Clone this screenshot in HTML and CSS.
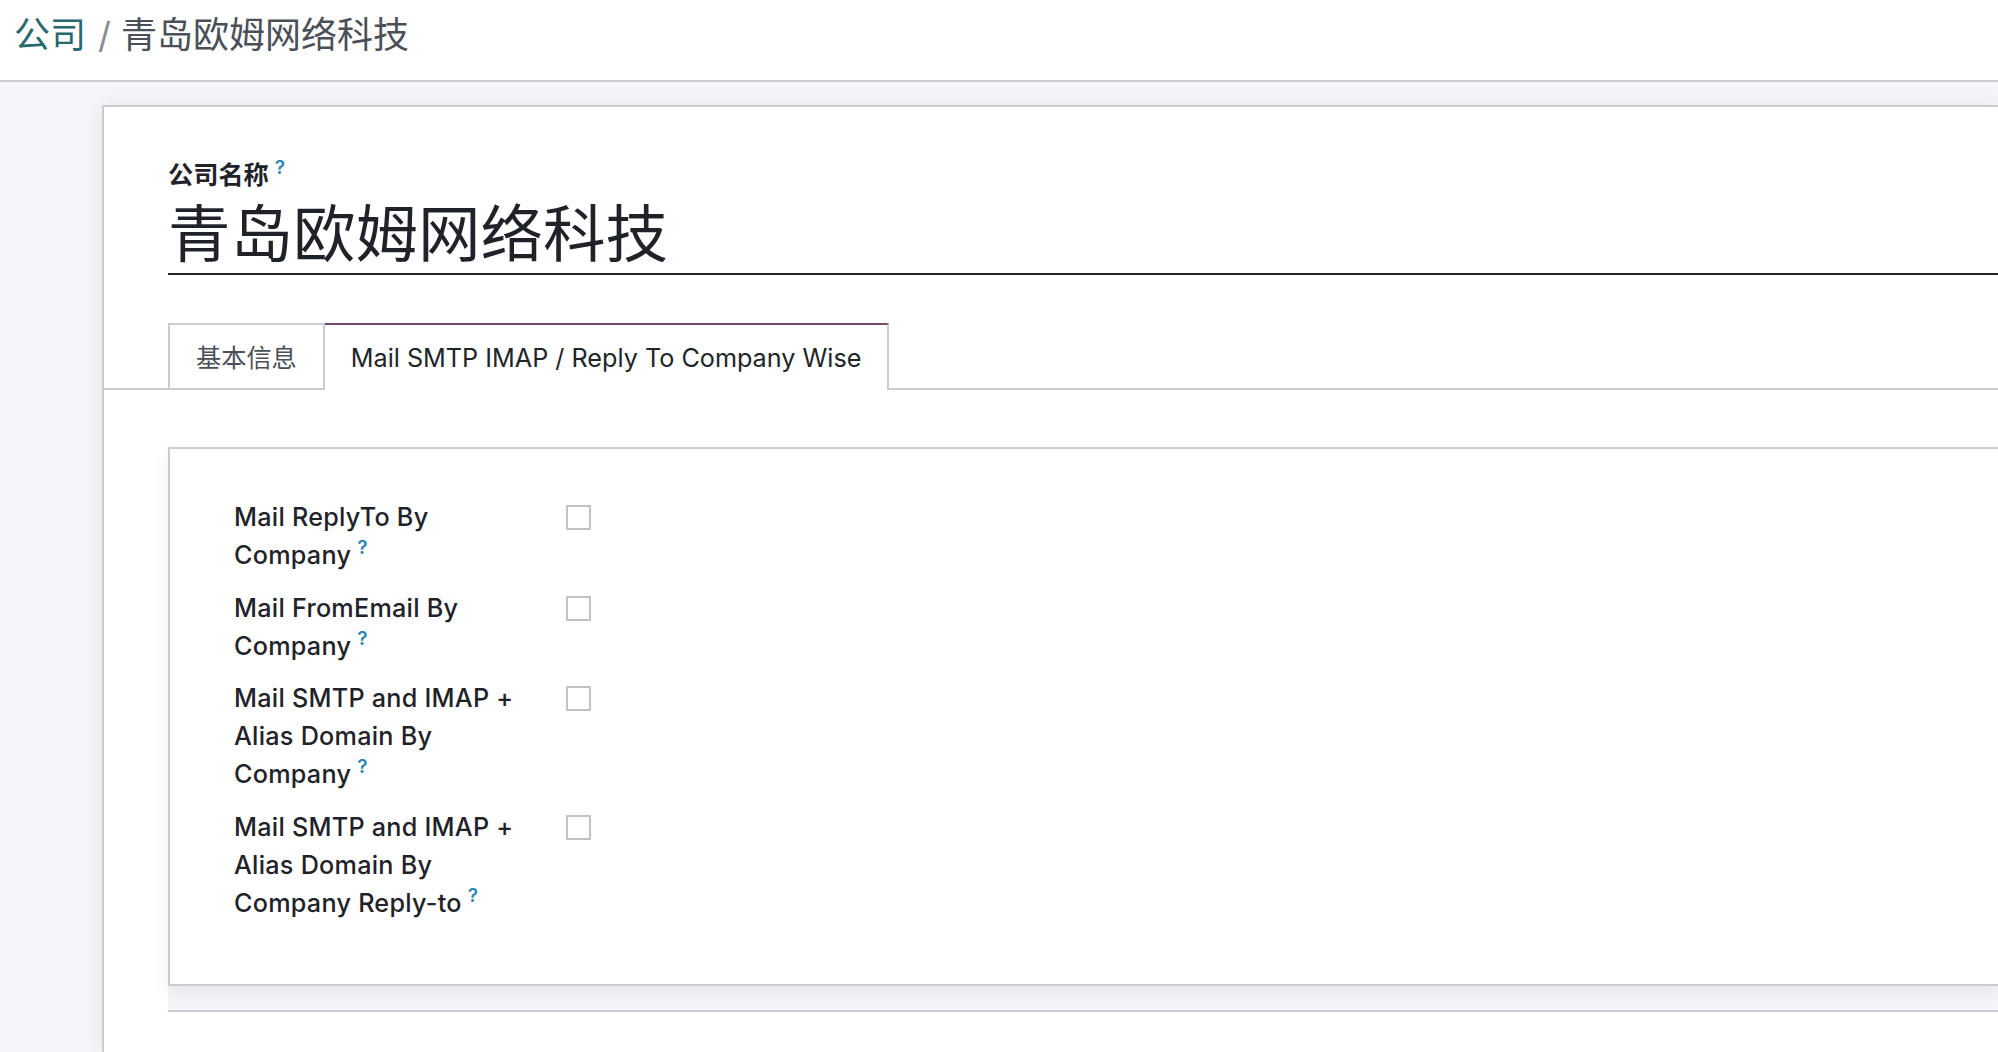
FILE: index.html
```html
<!DOCTYPE html>
<html lang="zh-CN">
<head>
<meta charset="utf-8">
<title>公司 / 青岛欧姆网络科技</title>
<link rel="stylesheet" href="styles.css">
</head>
<body>
<header class="topbar">
  <nav class="crumbs">
    <a class="crumb-link" href="#">公司</a>
    <span class="crumb-sep">/</span>
    <span class="crumb-current">青岛欧姆网络科技</span>
  </nav>
</header>
<main class="sheet-bg">
  <section class="sheet">
    <div class="title-block">
      <label class="name-label">公司名称<sup class="help">?</sup></label>
      <div class="name-input">青岛欧姆网络科技</div>
    </div>
    <div class="tabs">
      <div class="tab">基本信息</div>
      <div class="tab tab-active">Mail SMTP IMAP / Reply To Company Wise</div>
    </div>
    <div class="inner-bg">
      <div class="inner-sheet">
        <div class="group">
          <div class="field-label">Mail ReplyTo By<br>Company<sup class="help">?</sup></div>
          <div class="field-value"><span class="checkbox"></span></div>

          <div class="field-label">Mail FromEmail By<br>Company<sup class="help">?</sup></div>
          <div class="field-value"><span class="checkbox"></span></div>

          <div class="field-label">Mail SMTP and IMAP +<br>Alias Domain By<br>Company<sup class="help">?</sup></div>
          <div class="field-value"><span class="checkbox"></span></div>

          <div class="field-label">Mail SMTP and IMAP +<br>Alias Domain By<br>Company Reply-to<sup class="help">?</sup></div>
          <div class="field-value"><span class="checkbox"></span></div>
        </div>
      </div>
    </div>
  </section>
</main>
</body>
</html>
```

FILE: styles.css
```css
* { box-sizing: border-box; }

html, body {
  margin: 0;
  height: 100%;
  overflow: hidden;
}

body {
  font-family: Inter, "Noto Sans CJK SC", sans-serif;
  color: #212529;
  background: #f4f5f8;
}

.topbar {
  height: 82px;
  background: #ffffff;
  border-bottom: 2px solid #cbcbd0;
  padding: 11px 0 0 14px;
}

.crumbs {
  display: flex;
  align-items: center;
  font-size: 36px;
  line-height: 48px;
}

.crumb-link {
  color: #27696e;
  text-decoration: none;
}

.crumb-sep {
  color: #8a8d93;
  margin: 0 10px 0 12px;
}

.crumb-current {
  color: #4a4f58;
}

.sheet-bg {
  height: calc(100% - 82px);
  padding: 23px 0 0 102px;
}

.sheet {
  height: 100%;
  background: #ffffff;
  border-top: 2px solid #cbcbd0;
  border-left: 2px solid #cbcbd0;
  box-shadow: 0 0 18px rgba(30, 35, 60, 0.06);
  padding: 49px 0 0 64px;
}

.name-label {
  display: block;
  font-size: 25.2px;
  line-height: 38px;
  font-weight: 700;
  color: #1f2329;
}

.help {
  color: #2f86b6;
  font-size: 19px;
  line-height: 0;
  font-weight: 600;
  margin-left: 6px;
  vertical-align: 0;
  position: relative;
  top: -10px;
}

.name-input {
  margin-top: 3px;
  font-size: 62.5px;
  line-height: 74px;
  padding-bottom: 2px;
  border-bottom: 2px solid #212529;
  color: #1f2329;
}

.tabs {
  display: flex;
  margin: 48px 0 0 -64px;
  padding-left: 64px;
  border-bottom: 2px solid #cbcbd0;
}

.tab {
  font-size: 25.2px;
  line-height: 38px;
  padding: 14px 26px 11px;
  color: #4a4f58;
  background: #ffffff;
  border-top: 2px solid #cbcbd0;
  border-left: 2px solid #cbcbd0;
  border-right: 2px solid #cbcbd0;
}

.tab-active {
  color: #212529;
  border-top: 2px solid #714b67;
  border-left: 0;
  padding-left: 26px;
  padding-right: 26px;
  padding-bottom: 13px;
  margin-bottom: -2px;
}

.inner-bg {
  margin-top: 57px;
  background: #f4f5f8;
  border-bottom: 2px solid #cbcbd0;
  padding-bottom: 24px;
}

.inner-sheet {
  background: #ffffff;
  border-top: 2px solid #cbcbd0;
  border-left: 2px solid #cbcbd0;
  border-bottom: 2px solid #cbcbd0;
  box-shadow: 0 6px 16px rgba(30, 35, 60, 0.07);
  padding: 49px 0 62px 64px;
}

.group {
  display: grid;
  grid-template-columns: 332px 24px;
  row-gap: 14.7px;
}

.field-label {
  font-size: 25.2px;
  letter-spacing: 0.25px;
  line-height: 38px;
  font-weight: 500;
  color: #1f2329;
  white-space: nowrap;
}

.field-value {
  padding-top: 7px;
}

.checkbox {
  display: block;
  width: 25px;
  height: 25px;
  border: 2px solid #c2c2c6;
  border-radius: 1px;
  background: #ffffff;
}
```
